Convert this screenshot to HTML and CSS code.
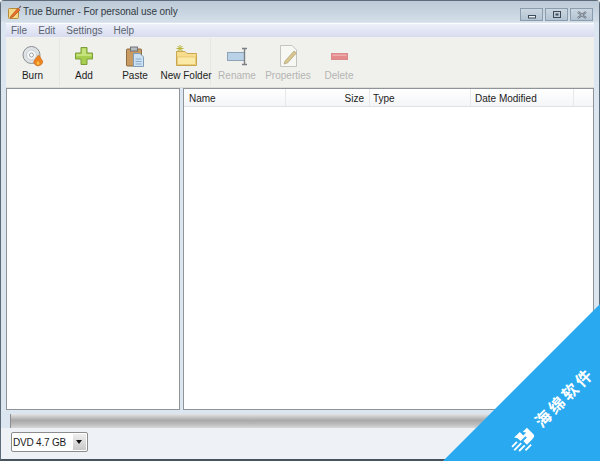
FILE: index.html
```html
<!DOCTYPE html>
<html lang="zh">
<head>
    <meta charset="UTF-8">
    <title>True Burner</title>
    <link rel="stylesheet" href="styles.css">
</head>
<body>
    <div class="window">
        <div class="titlebar">
            <svg class="app-icon" width="14" height="16" viewBox="0 0 14 16">
                <rect x=".5" y="4.5" width="10" height="10" rx="1" fill="#f3d98a" stroke="#b98a3a"/>
                <path d="M3 12 L10 4 L12 6 L5 13 L2 14 Z" fill="#e8702a" stroke="#a8481a" stroke-width=".6"/>
                <path d="M11 4 L13 2" stroke="#667" stroke-width="1.2"/>
            </svg>
            <span class="title">True Burner - For personal use only</span>
            <div class="win-buttons">
                <div class="win-btn"><svg width="10" height="8" viewBox="0 0 10 8"><rect x="1.5" y="4.5" width="7" height="2.5" fill="#eef2f6" stroke="#3f4a58"/></svg></div>
                <div class="win-btn"><svg width="10" height="8" viewBox="0 0 10 8"><rect x="1.5" y=".5" width="7" height="6" fill="none" stroke="#3f4a58"/><rect x="3.5" y="2.5" width="3" height="2" fill="#3f4a58"/></svg></div>
                <div class="win-btn"><svg width="10" height="8" viewBox="0 0 10 8"><path d="M1 1 L9 7 M9 1 L1 7" stroke="#4a5564" stroke-width="2"/><path d="M1 1 L9 7 M9 1 L1 7" stroke="#e6ecf2" stroke-width=".7"/></svg></div>
            </div>
        </div>
        <div class="menubar">
            <span>File</span><span>Edit</span><span>Settings</span><span>Help</span>
        </div>
        <div class="toolbar">
            <div class="tool tool-burn">
                <svg width="24" height="24" viewBox="0 0 24 24">
                    <circle cx="10.5" cy="11" r="8.5" fill="#dfe3e6" stroke="#8a8f94"/>
                    <circle cx="10.5" cy="11" r="5" fill="#f4f5f6" stroke="#b5babf" stroke-width=".6"/>
                    <circle cx="10.5" cy="11" r="2" fill="#fff" stroke="#8a8f94" stroke-width=".8"/>
                    <path d="M17 22 C12 21 12 17 14.5 15 C15 13 17 12 17.5 11 C19 12 20 14 20 15 C23 17 22 21 17 22 Z" fill="#ee8420" stroke="#b85a10" stroke-width=".5"/>
                    <path d="M17 21 C15 20 15 19 17 17 C19 19 19 20 17 21 Z" fill="#fbc14c"/>
                </svg>
                <span>Burn</span>
            </div>
            <div class="tool-sep"></div>
            <div class="tool tool-add">
                <svg width="24" height="24" viewBox="0 0 24 24">
                    <path d="M9 3.5 H15 V9 H20.5 V15 H15 V20.5 H9 V15 H3.5 V9 H9 Z" fill="#a6cf4f" stroke="#7d9c3a"/>
                    <path d="M10 4.5 H14 V10 H19.5 V12 H4.5 V10 H10 Z" fill="#c6e27c"/>
                </svg>
                <span>Add</span>
            </div>
            <div class="tool tool-paste">
                <svg width="24" height="24" viewBox="0 0 24 24">
                    <rect x="3.5" y="5" width="15" height="17" rx="1" fill="#c99a62" stroke="#8c6a42"/>
                    <rect x="7.5" y="3" width="7" height="4" fill="#b7bcc0" stroke="#70757a"/>
                    <path d="M10.5 9.5 H17 L20.5 13 V22.5 H10.5 Z" fill="#cfe2f3" stroke="#7f9cb8"/>
                    <path d="M12.5 15 H18.5 M12.5 17.5 H18.5 M12.5 20 H18.5" stroke="#88aacb"/>
                </svg>
                <span>Paste</span>
            </div>
            <div class="tool tool-folder">
                <svg width="24" height="24" viewBox="0 0 24 24">
                    <path d="M2.5 7.5 H11 L13 9.5 H22.5 V21.5 H2.5 Z" fill="#f6dc8c" stroke="#c9a650"/>
                    <rect x="3.5" y="13" width="18" height="7.5" fill="#fbe9a8" stroke="#e0bd60" stroke-width=".6"/>
                    <path d="M6 1 V8 M2.5 4.5 H9.5 M3.5 2 L8.5 7 M8.5 2 L3.5 7" stroke="#b9b63c"/>
                </svg>
                <span>New Folder</span>
            </div>
            <div class="tool-sep"></div>
            <div class="tool tool-rename disabled">
                <svg width="24" height="24" viewBox="0 0 24 24">
                    <rect x="2.5" y="8.5" width="17" height="8" fill="#b9d2e8" stroke="#8ea3b5"/>
                    <path d="M17 4.5 H22 M17 20.5 H22 M19.5 4.5 V20.5" stroke="#7b8085" stroke-width="1.4" fill="none"/>
                </svg>
                <span>Rename</span>
            </div>
            <div class="tool tool-props disabled">
                <svg width="24" height="24" viewBox="0 0 24 24">
                    <path d="M4.5 1.5 H16 L20.5 6 V22.5 H4.5 Z" fill="#f7f7f4" stroke="#c2c4c2"/>
                    <path d="M9 17 L18 7 L20.5 9 L11.5 19 L8 20 Z" fill="#d9c68c" stroke="#a79b78" stroke-width=".6"/>
                </svg>
                <span>Properties</span>
            </div>
            <div class="tool tool-delete disabled">
                <svg width="24" height="24" viewBox="0 0 24 24">
                    <rect x="4.5" y="9.5" width="16" height="6" fill="#e58b8b" stroke="#d98a8a"/>
                    <rect x="5.5" y="10.5" width="14" height="1.5" fill="#efadad"/>
                </svg>
                <span>Delete</span>
            </div>
        </div>
        <div class="panes">
            <div class="tree"></div>
            <div class="list">
                <div class="list-head">
                    <div class="col col-name">Name</div>
                    <div class="col col-size">Size</div>
                    <div class="col col-type">Type</div>
                    <div class="col col-date">Date Modified</div>
                    <div class="col col-rest"></div>
                </div>
            </div>
        </div>
        <div class="progress"></div>
        <div class="bottom">
            <div class="combo">
                <span class="combo-text">DVD 4.7 GB</span>
                <span class="combo-btn"></span>
            </div>
        </div>
    </div>
    <div class="ribbon">
        <div class="ribbon-label">
            <svg class="ribbon-logo" width="26" height="20" viewBox="0 0 26 20">
                <path d="M9 1 H17 V6 H21 L19 3 H25 V12 C25 15 22 15 20 15 H13 V10 H18 V8 H11 V4 Z" fill="#fff"/>
                <path d="M1 6 H8 M0 10 H10 M3 14 H11 M8 18 H16" stroke="#fff" stroke-width="1.8"/>
            </svg>
            <span class="ribbon-text">海绵软件</span>
        </div>
    </div>
</body>
</html>
```

FILE: styles.css
```css
html, body {
    margin: 0;
    height: 100%;
    overflow: hidden;
}

body {
    position: relative;
    width: 600px;
    height: 461px;
    font-family: "Liberation Sans", Arial, sans-serif;
    font-size: 10px;
    color: #1c1c1c;
}

.window {
    box-sizing: border-box;
    width: 600px;
    height: 461px;
    display: flex;
    flex-direction: column;
    background: #dce6f0;
    border: 1px solid #5d6b78;
    border-bottom: 2px solid #46525e;
    border-radius: 4px 4px 0 0;
}

.titlebar {
    height: 21px;
    display: flex;
    align-items: center;
    padding: 0 6px 0 7px;
    background: linear-gradient(to bottom, #bccad7, #d3dee8);
    flex-shrink: 0;
}

.app-icon {
    margin-right: 1px;
}

.title {
    color: #333b42;
    flex: 1;
    letter-spacing: -.1px;
}

.win-buttons {
    display: flex;
    gap: 2px;
    margin-top: 6px;
}

.win-btn {
    width: 21px;
    height: 11px;
    display: flex;
    align-items: center;
    justify-content: center;
    border: 1px solid #8b9cac;
    background: linear-gradient(to bottom, #cad6e1, #b5c4d2);
}

.menubar {
    margin: 1px 5px 0;
    height: 13px;
    display: flex;
    align-items: center;
    gap: 11px;
    padding-left: 5px;
    background: linear-gradient(to bottom, #eef0fa, #d7dcef);
    border-top: 1px solid #fbfcfd;
    color: #5a646e;
    flex-shrink: 0;
}

.toolbar {
    margin: 0 5px;
    height: 50px;
    display: flex;
    background: #f0f0ec;
    border-bottom: 1px solid #dcdcd8;
    flex-shrink: 0;
}

.tool {
    display: flex;
    flex-direction: column;
    align-items: center;
    padding-top: 7px;
    white-space: nowrap;
}

.tool span {
    line-height: 14px;
    margin-top: 1px;
}

.tool svg {
    flex-shrink: 0;
}

.tool-sep {
    width: 1px;
    margin: 1px 0;
    background: #e6e6e2;
}

.tool-burn {
    width: 53px;
}

.tool-add {
    width: 48px;
}

.tool-paste {
    width: 54px;
}

.tool-folder {
    width: 48px;
    position: relative;
    z-index: 1;
}

.tool-rename {
    width: 52px;
}

.tool-props {
    width: 50px;
}

.tool-delete {
    width: 52px;
}

.disabled {
    color: #b4b5b3;
}

.panes {
    flex: 1;
    margin: 0 5px;
    display: flex;
    gap: 3px;
    min-height: 0;
}

.tree,
.list {
    background: #fff;
    border: 1px solid #8f9499;
}

.tree {
    width: 172px;
}

.list {
    flex: 1;
}

.list-head {
    height: 17px;
    display: flex;
    align-items: center;
    background: linear-gradient(to bottom, #ffffff, #f4f5f7);
    border-bottom: 1px solid #dfe2e6;
}

.col {
    height: 100%;
    box-sizing: border-box;
    padding: 0 5px;
    line-height: 19px;
    border-right: 1px solid #e6e8ea;
}

.col-name {
    width: 102px;
}

.col-size {
    width: 84px;
    text-align: right;
}

.col-type {
    width: 101px;
    padding-left: 3px;
}

.col-date {
    width: 103px;
    padding-left: 4px;
}

.col-rest {
    flex: 1;
    border-right: 0;
}

.progress {
    margin: 4px 8px 0 9px;
    height: 14px;
    background: linear-gradient(to bottom, #e4e4e4, #a9a9a9 45%, #b9b9b9 70%, #d8d8d8);
    border-left: 1px solid #8e8e8e;
    flex-shrink: 0;
}

.bottom {
    height: 31px;
    padding: 4px 0 0 10px;
    box-sizing: border-box;
    flex-shrink: 0;
    background: #eef1f6;
}

.combo {
    box-sizing: border-box;
    width: 77px;
    height: 20px;
    display: flex;
    align-items: center;
    justify-content: space-between;
    background: #fff;
    border: 1px solid #8c8c8c;
    border-radius: 2px;
    padding: 0 1px 0 1px;
}

.combo-text {
    font-size: 10px;
    letter-spacing: -.2px;
}

.combo-btn {
    width: 13px;
    height: 16px;
    background: linear-gradient(to bottom, #eee, #c9c9c9);
    position: relative;
}

.combo-btn::after {
    content: "";
    position: absolute;
    left: 3px;
    top: 6px;
    border: 3.5px solid transparent;
    border-top: 4px solid #111;
    border-bottom: 0;
}

.ribbon {
    position: absolute;
    left: 443px;
    top: 304px;
    width: 157px;
    height: 157px;
    background: #29aaf0;
    clip-path: polygon(100% 0, 100% 100%, 0 100%);
}

.ribbon-label {
    position: absolute;
    left: 51px;
    top: 78px;
    width: 140px;
    display: flex;
    align-items: center;
    gap: 9px;
    transform: rotate(-45deg);
    color: #fff;
}

.ribbon-text {
    font-family: "Noto Sans CJK SC", sans-serif;
    font-size: 16px;
    font-weight: 700;
    letter-spacing: 3px;
    white-space: nowrap;
}

.ribbon-logo {
    flex-shrink: 0;
    margin: 7px 0 0 -4px;
}
```
